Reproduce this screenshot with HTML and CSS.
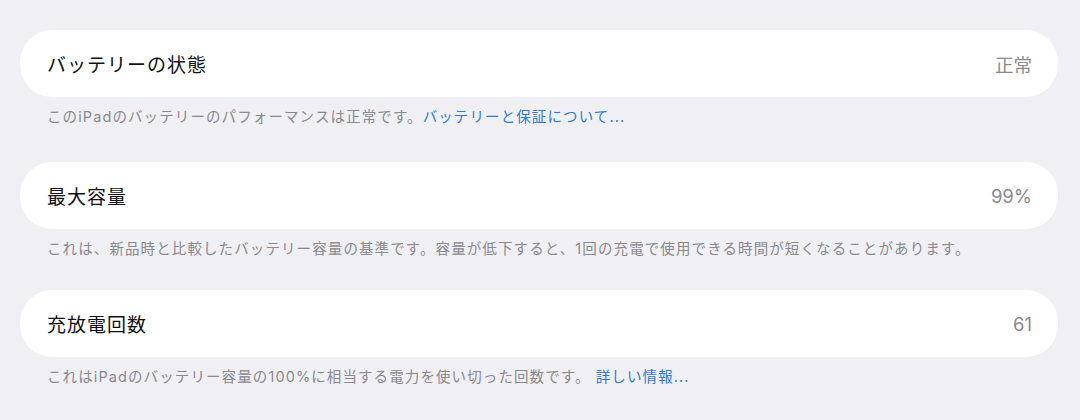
FILE: index.html
```html
<!DOCTYPE html>
<html lang="ja">
<head>
    <meta charset="UTF-8">
    <title>バッテリーの状態</title>
    <link rel="stylesheet" href="styles.css">
</head>
<body>
    <div class="settings">
        <div class="group">
            <div class="cell">
                <span class="cell-title">バッテリーの状態</span>
                <span class="cell-value">正常</span>
            </div>
            <p class="footnote">このiPadのバッテリーのパフォーマンスは正常です。<a href="#">バッテリーと保証について...</a></p>
        </div>

        <div class="group">
            <div class="cell">
                <span class="cell-title">最大容量</span>
                <span class="cell-value">99%</span>
            </div>
            <p class="footnote short">これは、新品時と比較したバッテリー容量の基準です。容量が低下すると、1回の充電で使用できる時間が短くなることがあります。</p>
        </div>

        <div class="group">
            <div class="cell">
                <span class="cell-title">充放電回数</span>
                <span class="cell-value">61</span>
            </div>
            <p class="footnote">これはiPadのバッテリー容量の100%に相当する電力を使い切った回数です。 <a href="#">詳しい情報...</a></p>
        </div>
    </div>
</body>
</html>
```

FILE: styles.css
```css
:root {
    --bg-color: #efeff4;
    --text-color: #111113;
    --secondary-color: #8a8a8e;
    --link-color: #2f7ad3;
}

body {
    margin: 0;
    background-color: var(--bg-color);
    font-family: Inter, "Noto Sans CJK JP", sans-serif;
    color: var(--text-color);
}

.settings {
    padding: 30px 22px 0 20px;
}

.cell {
    display: flex;
    justify-content: space-between;
    align-items: center;
    height: 67px;
    padding: 0 26px 0 27px;
    background: white;
    border-radius: 32px;
}

.cell-title {
    font-size: 19px;
    letter-spacing: 1px;
}

.cell-value {
    font-size: 18.5px;
    color: var(--secondary-color);
}

.footnote {
    margin: 0;
    padding: 11px 27px 36px;
    font-size: 14.5px;
    line-height: 18px;
    letter-spacing: 1.1px;
    color: var(--secondary-color);
}

.footnote.short {
    padding-bottom: 32px;
}

.footnote a {
    color: var(--link-color);
    text-decoration: none;
}
```
